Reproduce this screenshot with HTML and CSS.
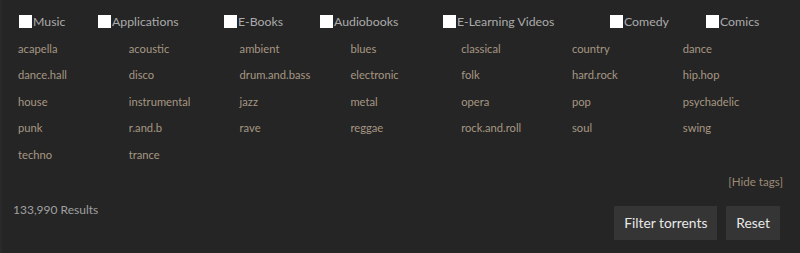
FILE: index.html
```html
<!DOCTYPE html>
<html lang="en">
<head>
    <meta charset="utf-8">
    <title>Filter</title>
    <link rel="stylesheet" href="styles.css">
</head>
<body>
    <div class="filters">
        <div class="cats">
            <label class="cat"><input type="checkbox">Music</label>
            <label class="cat"><input type="checkbox">Applications</label>
            <label class="cat"><input type="checkbox">E-Books</label>
            <label class="cat"><input type="checkbox">Audiobooks</label>
            <label class="cat"><input type="checkbox">E-Learning Videos</label>
            <label class="cat"><input type="checkbox">Comedy</label>
            <label class="cat"><input type="checkbox">Comics</label>
        </div>
        <div class="tags">
            <a href="#">acapella</a>
            <a href="#">acoustic</a>
            <a href="#">ambient</a>
            <a href="#">blues</a>
            <a href="#">classical</a>
            <a href="#">country</a>
            <a href="#">dance</a>
            <a href="#">dance.hall</a>
            <a href="#">disco</a>
            <a href="#">drum.and.bass</a>
            <a href="#">electronic</a>
            <a href="#">folk</a>
            <a href="#">hard.rock</a>
            <a href="#">hip.hop</a>
            <a href="#">house</a>
            <a href="#">instrumental</a>
            <a href="#">jazz</a>
            <a href="#">metal</a>
            <a href="#">opera</a>
            <a href="#">pop</a>
            <a href="#">psychadelic</a>
            <a href="#">punk</a>
            <a href="#">r.and.b</a>
            <a href="#">rave</a>
            <a href="#">reggae</a>
            <a href="#">rock.and.roll</a>
            <a href="#">soul</a>
            <a href="#">swing</a>
            <a href="#">techno</a>
            <a href="#">trance</a>
        </div>
        <div class="hide"><a href="#">[Hide tags]</a></div>
        <div class="bottom">
            <span class="count">133,990 Results</span>
            <div class="btns">
                <button type="button">Filter torrents</button>
                <button type="button">Reset</button>
            </div>
        </div>
    </div>
</body>
</html>
```

FILE: styles.css
```css
html, body{
    margin: 0;
    padding: 0;
    background: #252525;
}
body{
    font-family: Lato, "Open Sans", sans-serif;
    height: 253px;
    border-left: 2px solid #2a2a2a;
    box-sizing: border-box;
}
.filters{
    padding: 13px 20px 0 12px;
}

.cats{
    display: grid;
    grid-template-columns: 79px 126px 96px 123px 167px 96px auto;
    padding-left: 5px;
    height: 18px;
}
.cat{
    display: flex;
    align-items: center;
    font-size: 12.3px;
    line-height: 18px;
    color: #ababab;
}
.cat input{
    -webkit-appearance: none;
    appearance: none;
    margin: 0 1px 2px 0;
    width: 13px;
    height: 13px;
    background: #fff;
    border: none;
    border-radius: 0;
}

.tags{
    display: grid;
    grid-template-columns: repeat(7, 110.8px);
    grid-auto-rows: 26.5px;
    align-items: center;
    margin: 4px 0 0 4px;
}
.tags a{
    font-size: 11.2px;
    color: #a69783;
    text-decoration: none;
}

.hide{
    text-align: right;
    margin: 3px -3px 0 0;
    line-height: 18px;
}
.hide a{
    font-size: 11.6px;
    color: #9c8b75;
    text-decoration: none;
}

.bottom{
    display: flex;
    justify-content: space-between;
    align-items: flex-start;
    margin-top: 10px;
}
.count{
    font-size: 12px;
    line-height: 18px;
    color: #a0a0a0;
    margin-left: -1px;
}
.btns{
    display: flex;
    gap: 9px;
    margin-top: 5px;
}
.btns button{
    height: 34px;
    padding: 0 10px;
    border: none;
    background: #353535;
    color: #e8e8e8;
    font-family: Lato, "Open Sans", sans-serif;
    font-size: 13.8px;
}
```
